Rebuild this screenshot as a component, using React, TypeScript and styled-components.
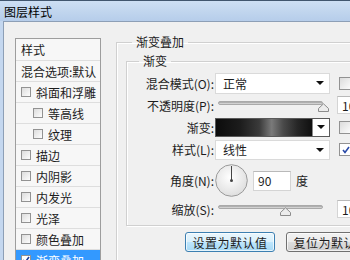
import React from "react";
import styled, { createGlobalStyle } from "styled-components";

const GlobalStyle = createGlobalStyle`
  html, body {
    margin: 0;
    padding: 0;
  }
  body {
    width: 350px;
    height: 260px;
    overflow: hidden;
    font-family: "Noto Sans CJK SC", "Noto Sans", sans-serif;
    font-size: 12px;
    color: #1c1c1c;
  }
`;

const Window = styled.div`
  width: 350px;
  height: 260px;
  overflow: hidden;
  display: flex;
  flex-direction: column;
  background: #c4d7ef;
`;

const TitleBar = styled.div`
  flex: none;
  height: 20px;
  border-top: 1px solid #41566e;
  background: linear-gradient(#cddff3, #b6cdea);
  display: flex;
  align-items: center;
  padding-left: 4px;
  font-size: 12px;
  color: #000;
`;

const Body = styled.div`
  flex: 1;
  min-height: 0;
  margin-left: 3px;
  border-left: 1px solid #8d9fb6;
  border-top: 1px solid #8d9fb6;
  background: #f0f0f0;
  display: flex;
  align-items: flex-start;
  overflow: hidden;
`;

const Sidebar = styled.ul`
  flex: none;
  list-style: none;
  margin: 16px 0 0 11px;
  padding: 0;
  width: 86px;
  box-sizing: border-box;
  border: 1px solid #9d9d9d;
  background: #f7f7f7;
`;

const ListRow = styled.li<{ $indent?: boolean; $selected?: boolean; $tall?: boolean }>`
  height: ${(p) => (p.$tall ? 21 : 20)}px;
  border-bottom: 1px solid #dedede;
  display: flex;
  align-items: center;
  gap: 5px;
  padding-left: ${(p) => (p.$indent ? 17 : 5)}px;
  white-space: nowrap;
  background: ${(p) => (p.$selected ? "#3399ff" : "transparent")};
  color: ${(p) => (p.$selected ? "#fff" : "#1c1c1c")};
`;

const Box = styled.span<{ $checked?: boolean; $size?: number }>`
  flex: none;
  box-sizing: border-box;
  width: ${(p) => p.$size ?? 10}px;
  height: ${(p) => p.$size ?? 10}px;
  border: 1px solid #929292;
  background: linear-gradient(135deg, #dcdcdc, #fdfdfd);
  display: flex;
  align-items: center;
  justify-content: center;
  ${(p) => (p.$checked ? "background: #fff;" : "")}
`;

const Main = styled.div`
  flex: none;
  margin: 12px 0 0 15px;
`;

const OuterSet = styled.fieldset`
  margin: 0;
  width: 260px;
  padding: 3px 0 12px 9px;
  border: 1px solid #d0d0d0;
  box-shadow: inset 1px 1px 0 #fff, 1px 1px 0 #fff;
  min-width: 0;
`;

const InnerSet = styled.fieldset`
  margin: 0;
  width: 250px;
  padding: 3px 0 7px 0;
  border: 1px solid #d0d0d0;
  box-shadow: inset 1px 1px 0 #fff, 1px 1px 0 #fff;
  min-width: 0;
`;

const Legend = styled.legend<{ $offset: number }>`
  margin-left: ${(p) => p.$offset}px;
  padding: 0 4px;
  line-height: 16px;
  font-size: 12px;
  color: #1c1c1c;
`;

const Grid = styled.div`
  display: grid;
  grid-template-columns: 88px 115px 7px 40px;
  grid-template-rows: 22px 22px 22px 23px 39px 18px;
  align-items: center;
`;

const Label = styled.div`
  grid-column: 1;
  text-align: right;
  padding-right: 1px;
  white-space: nowrap;
`;

const Cell = styled.div`
  grid-column: 2;
  display: flex;
  align-items: center;
`;

const Extra = styled.div`
  grid-column: 4;
  display: flex;
  align-items: center;
`;

const Select = styled.div<{ $h: number }>`
  box-sizing: border-box;
  width: 115px;
  height: ${(p) => p.$h}px;
  border: 1px solid #dadada;
  background: #fff;
  display: flex;
  align-items: center;
  justify-content: space-between;
  padding: 0 5px 0 7px;
`;

const Arrow = styled.span`
  width: 0;
  height: 0;
  border-left: 4px solid transparent;
  border-right: 4px solid transparent;
  border-top: 4px solid #111;
`;

const SliderBox = styled.div`
  position: relative;
  width: 115px;
  height: 18px;
`;

const Track = styled.div`
  margin: 5px 0 0 3px;
  width: 105px;
  height: 4px;
  box-sizing: border-box;
  border: 1px solid #a9a9a9;
  border-radius: 2px;
  background: linear-gradient(#9f9f9f, #e2e2e2);
`;

const Thumb = styled.svg`
  position: absolute;
  top: 7px;
`;

const NumInput = styled.div<{ $w: number; $h: number }>`
  box-sizing: border-box;
  width: ${(p) => p.$w}px;
  height: ${(p) => p.$h}px;
  border: 1px solid #d4d4d4;
  border-top-color: #b9b9b9;
  background: #fff;
  display: flex;
  align-items: center;
  padding-left: 4px;
  font-size: 12px;
`;

const GradientCombo = styled.div`
  box-sizing: border-box;
  width: 115px;
  height: 19px;
  border: 1px solid #5a5a5a;
  display: flex;
`;

const Swatch = styled.div`
  flex: 1;
  background: linear-gradient(
    90deg,
    #0c0c0c 0%,
    #1c1c1c 25%,
    #3a3a3a 45%,
    #7a7a7a 58%,
    #4a4a4a 70%,
    #262626 85%,
    #101010 100%
  );
  border-right: 1px solid #8a8a8a;
`;

const ComboButton = styled.div`
  width: 16px;
  background: #fff;
  display: flex;
  align-items: center;
  justify-content: center;
`;

const AngleCell = styled(Cell)`
  gap: 5px;
`;

const Buttons = styled.div`
  display: flex;
  gap: 11px;
  margin: 6px 0 0 59px;
`;

const Button = styled.div<{ $primary?: boolean }>`
  box-sizing: border-box;
  width: 90px;
  height: 20px;
  flex: none;
  border-radius: 3px;
  border: 1px solid ${(p) => (p.$primary ? "#3c7fb1" : "#707070")};
  background: ${(p) =>
    p.$primary
      ? "linear-gradient(#e9f6fd 0%, #d9f0fc 50%, #bee6fd 51%, #a7d9f5 100%)"
      : "linear-gradient(#f2f2f2 0%, #ebebeb 50%, #dddddd 51%, #cfcfcf 100%)"};
  box-shadow: inset 0 0 0 1px rgba(255, 255, 255, 0.7);
  display: flex;
  align-items: center;
  justify-content: center;
  font-size: 12px;
  letter-spacing: 0.5px;
  white-space: nowrap;
`;

const Check = ({ color }: { color: string }) => (
  <svg width="8" height="8" viewBox="0 0 8 8">
    <path d="M1 4 L3 6.5 L7 1" fill="none" stroke={color} strokeWidth="1.6" />
  </svg>
);

const Slider = ({ pct }: { pct: number }) => (
  <SliderBox>
    <Track />
    <Thumb width="11" height="9" viewBox="0 0 11 9" style={{ left: 3 + pct * 105 - 5.5 }}>
      <path d="M0.5 8.5 L0.5 5.5 L5.5 0.8 L10.5 5.5 L10.5 8.5 Z" fill="#ececec" stroke="#8c8c8c" />
    </Thumb>
  </SliderBox>
);

const Dial = () => (
  <svg width="33" height="33" viewBox="0 0 33 33">
    <defs>
      <radialGradient id="dialFill" cx="45%" cy="40%" r="65%">
        <stop offset="0%" stopColor="#ffffff" />
        <stop offset="100%" stopColor="#dcdcdc" />
      </radialGradient>
    </defs>
    <circle cx="16.5" cy="16.5" r="15.8" fill="url(#dialFill)" stroke="#9a9a9a" />
    <line x1="16.5" y1="16.5" x2="16.5" y2="2" stroke="#444" strokeWidth="1" />
    <circle cx="16.5" cy="16.5" r="1.5" fill="#444" />
  </svg>
);

const effects: { name: string; indent?: boolean; selected?: boolean }[] = [
  { name: "斜面和浮雕" },
  { name: "等高线", indent: true },
  { name: "纹理", indent: true },
  { name: "描边" },
  { name: "内阴影" },
  { name: "内发光" },
  { name: "光泽" },
  { name: "颜色叠加" },
  { name: "渐变叠加", selected: true },
];

export default function App() {
  return (
    <>
      <GlobalStyle />
      <Window>
        <TitleBar>图层样式</TitleBar>
        <Body>
          <Sidebar>
            <ListRow $tall>样式</ListRow>
            <ListRow>混合选项:默认</ListRow>
            {effects.map((e) => (
              <ListRow key={e.name} $indent={e.indent} $selected={e.selected}>
                <Box $checked={e.selected}>{e.selected && <Check color="#1d3f9c" />}</Box>
                {e.name}
              </ListRow>
            ))}
          </Sidebar>
          <Main>
            <OuterSet>
              <Legend $offset={6}>渐变叠加</Legend>
              <InnerSet>
                <Legend $offset={12}>渐变</Legend>
                <Grid>
                  <Label>混合模式(O):</Label>
                  <Cell>
                    <Select $h={21}>
                      正常
                      <Arrow />
                    </Select>
                  </Cell>
                  <Extra>
                    <Box $size={13} style={{ marginLeft: 2 }} />
                  </Extra>

                  <Label>不透明度(P):</Label>
                  <Cell>
                    <Slider pct={1} />
                  </Cell>
                  <Extra>
                    <NumInput $w={40} $h={18}>10</NumInput>
                  </Extra>

                  <Label>渐变:</Label>
                  <Cell>
                    <GradientCombo>
                      <Swatch />
                      <ComboButton>
                        <Arrow />
                      </ComboButton>
                    </GradientCombo>
                  </Cell>
                  <Extra>
                    <Box $size={13} style={{ marginLeft: 2 }} />
                  </Extra>

                  <Label>样式(L):</Label>
                  <Cell>
                    <Select $h={20}>
                      线性
                      <Arrow />
                    </Select>
                  </Cell>
                  <Extra>
                    <Box $size={13} $checked style={{ marginLeft: 2 }}>
                      <Check color="#2a4aa8" />
                    </Box>
                  </Extra>

                  <Label>角度(N):</Label>
                  <AngleCell>
                    <Dial />
                    <NumInput $w={38} $h={20}>90</NumInput>
                    <span>度</span>
                  </AngleCell>
                  <Extra />

                  <Label>缩放(S):</Label>
                  <Cell>
                    <Slider pct={(100 - 10) / 140} />
                  </Cell>
                  <Extra>
                    <NumInput $w={40} $h={18}>10</NumInput>
                  </Extra>
                </Grid>
              </InnerSet>
              <Buttons>
                <Button $primary>设置为默认值</Button>
                <Button>复位为默认值</Button>
              </Buttons>
            </OuterSet>
          </Main>
        </Body>
      </Window>
    </>
  );
}
